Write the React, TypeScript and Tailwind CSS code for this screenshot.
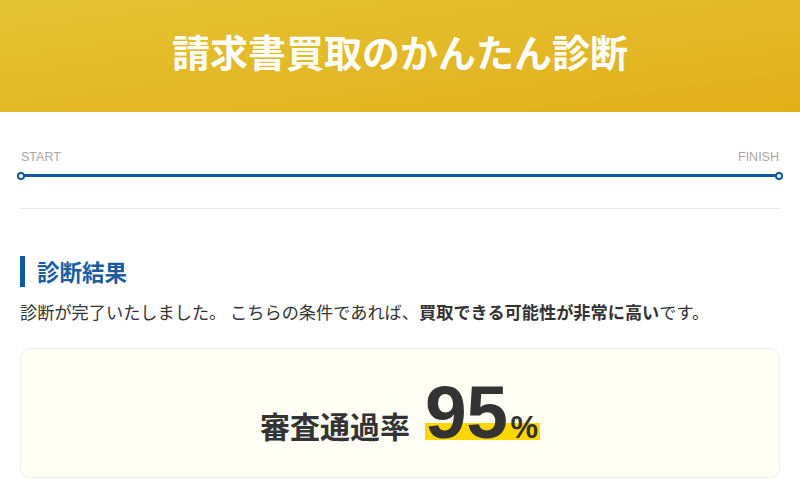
import React from 'react';

const jp = 'font-["Noto_Sans_CJK_JP","Noto_Sans",sans-serif]';

const App: React.FC = () => {
  return (
    <div className={`min-h-screen bg-white text-[#333] ${jp}`}>
      <header className="h-[112px] pb-[10px] flex items-center justify-center bg-gradient-to-br from-[#e4c433] to-[#e2ae19]">
        <h1 className="text-[38px] font-bold text-white leading-none">請求書買取のかんたん診断</h1>
      </header>

      <main className="px-5">
        {/* progress */}
        <div className="pt-[37px]">
          <div className='flex justify-between text-[12.5px] leading-4 text-[#a8a8a8] font-["Liberation_Sans",sans-serif]'>
            <span className="pl-[1px]">START</span>
            <span className="pr-[1px]">FINISH</span>
          </div>
          <div className="relative mt-[9px] h-[3px] bg-[#0d5a9c]">
            <span className="absolute -left-[3px] -top-[2.5px] w-2 h-2 rounded-full border-2 border-[#0d5a9c] bg-white" />
            <span className="absolute -right-[3px] -top-[2.5px] w-2 h-2 rounded-full border-2 border-[#0d5a9c] bg-white" />
          </div>
        </div>
        <div className="mt-[31px] border-t border-[#e8e8e8]" />

        {/* result */}
        <h2 className="mt-[47px] flex items-center h-[31px] border-l-[5px] border-[#0d5a9c] pl-3 text-[22.5px] font-bold text-[#1b5e9f] leading-none">
          診断結果
        </h2>
        <p className="mt-[11px] text-[17.2px] leading-7">
          診断が完了いたしました。 こちらの条件であれば、<b className="font-bold">買取できる可能性が非常に高い</b>です。
        </p>

        <div className="mt-[22px] h-[130px] rounded-[10px] border border-[#eeeeea] bg-[#fffef5] flex items-center justify-center">
          <div className="flex items-baseline -mt-[2px]">
            <span className="text-[30px] font-bold leading-none">審査通過率</span>
            <span className='relative ml-[15px] flex items-baseline font-["Liberation_Sans",sans-serif] font-bold leading-none'>
              <span className="absolute left-0 right-0 bottom-[10px] h-[17px] bg-[#ffd700]" />
              <span className="relative text-[75px] tracking-[-0.5px]">95</span>
              <span className="relative text-[31px] ml-[3px] pr-[2px]">%</span>
            </span>
          </div>
        </div>
      </main>
    </div>
  );
};

export default App;
